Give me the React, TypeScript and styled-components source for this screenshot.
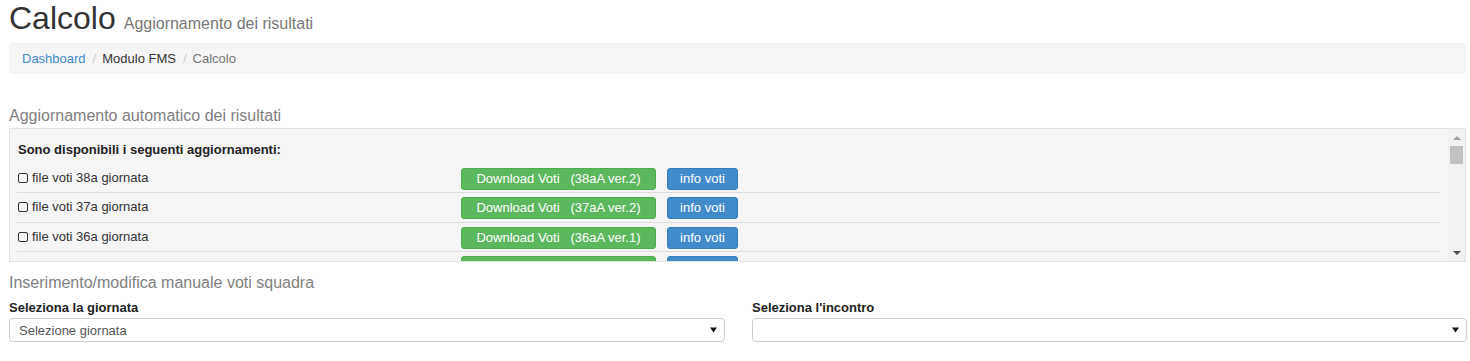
import React from 'react';
import styled, { createGlobalStyle } from 'styled-components';

interface Update {
  day: number;
  version: number;
}

interface ButtonProps {
  variant: 'success' | 'primary';
}

interface ArrowProps {
  disabled?: boolean;
  down?: boolean;
}

const updates: Update[] = [
  { day: 38, version: 2 },
  { day: 37, version: 2 },
  { day: 36, version: 1 },
  { day: 35, version: 1 },
];

const GlobalStyle = createGlobalStyle`
  * {
    box-sizing: border-box;
  }
  body {
    margin: 0;
    background: #ffffff;
    font-family: "Liberation Sans", Arial, sans-serif;
    font-size: 13px;
    color: #333333;
  }
`;

const Page = styled.div`
  padding: 1px 4px 0 9px;
`;

const Header = styled.h1`
  margin: 0;
  height: 35px;
  font-size: 32px;
  font-weight: normal;
  line-height: 35px;
  color: #333333;
`;

const Subtitle = styled.small`
  margin-left: 8px;
  font-size: 16px;
  line-height: 1;
  color: #777777;
`;

const Breadcrumb = styled.ol`
  display: flex;
  margin: 7px 0 0;
  padding: 8px 13px;
  list-style: none;
  line-height: 15px;
  background: #f5f5f5;
  border-radius: 4px;
`;

const Crumb = styled.li<{ active?: boolean }>`
  color: ${(props) => (props.active ? '#777777' : '#333333')};

  & + li::before {
    content: '/';
    padding: 0 6px 0 7px;
    color: #cccccc;
  }
`;

const CrumbLink = styled.a`
  color: #428bca;
  text-decoration: none;
`;

const SectionTitle = styled.h4<{ top: number }>`
  margin: ${(props) => props.top}px 0 0;
  font-size: 16px;
  font-weight: normal;
  line-height: 18px;
  color: #808080;
`;

const Well = styled.div`
  display: flex;
  height: 134px;
  margin-top: 3px;
  background: #f5f5f5;
  border: 1px solid #e3e3e3;
  overflow: hidden;
`;

const WellBody = styled.div`
  flex: 1;
  padding: 7px 8px 0 7px;
  overflow: hidden;
`;

const Intro = styled.p`
  margin: 0 0 5px;
  padding: 5px 1px 0;
  font-weight: bold;
  line-height: 18px;
  color: #222222;
`;

const Row = styled.div`
  display: flex;
  align-items: center;
  padding: 4px 0 2.35px;
  border-bottom: 1px solid #dddddd;
`;

const FileCell = styled.div`
  display: flex;
  align-items: center;
  gap: 4px;
  width: 444px;
  padding: 0 1px 2px;
  line-height: 18px;
`;

const Button = styled.button<ButtonProps>`
  width: ${(props) => (props.variant === 'success' ? '195px' : '71px')};
  height: 22px;
  margin-right: 11px;
  padding: 0;
  font-family: "Liberation Sans", Arial, sans-serif;
  font-size: 13px;
  line-height: 20px;
  color: #ffffff;
  white-space: pre;
  background: ${(props) => (props.variant === 'success' ? '#5cb85c' : '#428bca')};
  border: 1px solid ${(props) => (props.variant === 'success' ? '#4cae4c' : '#357ebd')};
  border-radius: 3px;
`;

const ScrollTrack = styled.div`
  display: flex;
  flex-direction: column;
  width: 17px;
  background: #f1f1f1;
`;

const ScrollButton = styled.div`
  display: flex;
  align-items: center;
  justify-content: center;
  height: 17px;
`;

const Arrow = styled.span<ArrowProps>`
  width: 0;
  height: 0;
  border-left: 4px solid transparent;
  border-right: 4px solid transparent;
  ${(props) =>
    props.down
      ? `border-top: 4px solid ${props.disabled ? '#a3a3a3' : '#505050'};`
      : `border-bottom: 4px solid ${props.disabled ? '#a3a3a3' : '#505050'};`}
`;

const ScrollThumb = styled.div`
  height: 18px;
  margin: 0 2px;
  background: #c1c1c1;
`;

const ScrollSpace = styled.div`
  flex: 1;
`;

const FormGrid = styled.div`
  display: grid;
  grid-template-columns: 716px 715px;
  column-gap: 27px;
  margin-top: 7px;
`;

const Label = styled.label`
  display: block;
  margin-bottom: 1px;
  font-weight: bold;
  line-height: 18px;
  color: #222222;
`;

const Select = styled.div`
  display: flex;
  align-items: center;
  justify-content: space-between;
  height: 24px;
  padding: 0 7px 0 9px;
  color: #555555;
  background: #ffffff;
  border: 1px solid #cccccc;
  border-radius: 4px;
`;

const Checkbox = () => (
  <svg width="10" height="10" viewBox="0 0 10 10">
    <rect x="0.5" y="0.5" width="9" height="9" rx="1.5" fill="none" stroke="#333" strokeWidth="1" />
  </svg>
);

const Caret = () => (
  <svg width="7" height="6" viewBox="0 0 7 6">
    <path d="M0 0.5h7L3.5 5.5z" fill="#111" />
  </svg>
);

const App: React.FC = () => {
  return (
    <Page>
      <GlobalStyle />
      <Header>
        Calcolo<Subtitle>Aggiornamento dei risultati</Subtitle>
      </Header>
      <Breadcrumb>
        <Crumb>
          <CrumbLink href="#">Dashboard</CrumbLink>
        </Crumb>
        <Crumb>Modulo FMS</Crumb>
        <Crumb active>Calcolo</Crumb>
      </Breadcrumb>

      <SectionTitle top={33}>Aggiornamento automatico dei risultati</SectionTitle>
      <Well>
        <WellBody>
          <Intro>Sono disponibili i seguenti aggiornamenti:</Intro>
          {updates.map((u) => (
            <Row key={u.day}>
              <FileCell>
                <Checkbox />
                file voti {u.day}a giornata
              </FileCell>
              <Button variant="success">{`Download Voti   (${u.day}aA ver.${u.version})`}</Button>
              <Button variant="primary">info voti</Button>
            </Row>
          ))}
        </WellBody>
        <ScrollTrack>
          <ScrollButton>
            <Arrow disabled />
          </ScrollButton>
          <ScrollThumb />
          <ScrollSpace />
          <ScrollButton>
            <Arrow down />
          </ScrollButton>
        </ScrollTrack>
      </Well>

      <SectionTitle top={12}>Inserimento/modifica manuale voti squadra</SectionTitle>
      <FormGrid>
        <div>
          <Label>Seleziona la giornata</Label>
          <Select>
            <span>Selezione giornata</span>
            <Caret />
          </Select>
        </div>
        <div>
          <Label>Seleziona l'incontro</Label>
          <Select>
            <span />
            <Caret />
          </Select>
        </div>
      </FormGrid>
    </Page>
  );
};

export default App;
